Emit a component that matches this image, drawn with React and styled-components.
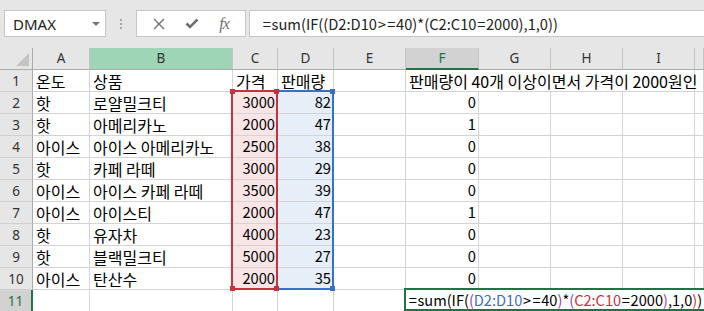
import React from "react";
import styled, { createGlobalStyle } from "styled-components";

const GlobalStyle = createGlobalStyle`
  body {
    margin: 0;
    background: #ffffff;
    overflow: hidden;
  }
`;

const CELL_FONT = `"Noto Sans CJK KR", "Noto Sans", sans-serif`;
const UI_FONT = `"Noto Sans", "Liberation Sans", sans-serif`;

const Window = styled.div`
  width: 704px;
  height: 311px;
  overflow: hidden;
  background: #ffffff;
`;

const Toolbar = styled.div`
  display: flex;
  align-items: center;
  height: 48px;
  padding: 0 0 1px 4px;
  box-sizing: border-box;
  background: #e6e6e6;
`;

const NameBox = styled.div`
  display: flex;
  align-items: center;
  justify-content: space-between;
  width: 102px;
  height: 27px;
  padding: 0 5px 0 8px;
  box-sizing: border-box;
  background: #ffffff;
  border: 1px solid #c6c6c6;
  font-family: ${UI_FONT};
  font-size: 15px;
  color: #222;
`;

const Caret = styled.span`
  width: 0;
  height: 0;
  border-left: 4px solid transparent;
  border-right: 4px solid transparent;
  border-top: 4px solid #777;
`;

const Grip = styled.div`
  display: flex;
  flex-direction: column;
  gap: 2px;
  margin: 0 14px 0 14px;
  span {
    width: 2px;
    height: 2px;
    background: #a8a8a8;
  }
`;

const ButtonGroup = styled.div`
  display: flex;
  align-items: center;
  justify-content: space-around;
  width: 110px;
  height: 27px;
  padding: 0 6px;
  box-sizing: border-box;
  background: #ffffff;
  border: 1px solid #c6c6c6;
  color: #6f6f6f;
`;

const Fx = styled.span`
  font-family: "Liberation Serif", serif;
  font-style: italic;
  font-size: 16px;
  color: #6f6f6f;
  letter-spacing: -1px;
`;

const FormulaInput = styled.div`
  flex: 1;
  display: flex;
  align-items: center;
  height: 27px;
  margin-left: 3px;
  padding-left: 12px;
  box-sizing: border-box;
  background: #ffffff;
  border: 1px solid #c6c6c6;
  border-right: none;
  font-family: ${CELL_FONT};
  font-size: 14.7px;
  color: #222;
  white-space: nowrap;
`;

const Sheet = styled.div`
  position: relative;
  display: grid;
  grid-template-columns: 33px 57px 143px 45px 56px 72px 73px 72px 72px 72px 1fr;
  grid-auto-rows: 22px;
`;

const Corner = styled.div`
  position: relative;
  background: #e6e6e6;
  border-right: 1px solid #ababab;
  border-bottom: 1px solid #ababab;
  &::after {
    content: "";
    position: absolute;
    right: 3px;
    bottom: 3px;
    width: 13px;
    height: 13px;
    background: #c4c4c4;
    clip-path: polygon(100% 0, 100% 100%, 0 100%);
  }
`;

const headerBg = { range: "#9fd5b7", selected: "#d2d2d2" };

const ColHeader = styled.div`
  display: flex;
  align-items: center;
  justify-content: center;
  padding-bottom: 1px;
  box-sizing: border-box;
  background: ${(p) => headerBg[p.$state] || "#e6e6e6"};
  border-right: 1px solid #c3c3c3;
  border-bottom: ${(p) =>
    p.$state === "selected" ? "2px solid #217346" : "1px solid #ababab"};
  font-family: ${UI_FONT};
  font-size: 13.5px;
  color: ${(p) => (p.$state === "selected" ? "#217346" : "#333")};
  overflow: hidden;
`;

const RowHeader = styled.div`
  display: flex;
  align-items: center;
  justify-content: center;
  box-sizing: border-box;
  background: ${(p) => (p.$selected ? "#d2d2d2" : "#e6e6e6")};
  border-right: ${(p) =>
    p.$selected ? "2px solid #217346" : "1px solid #ababab"};
  border-bottom: 1px solid #d0d0d0;
  font-family: ${UI_FONT};
  font-size: 13.5px;
  color: ${(p) => (p.$selected ? "#217346" : "#333")};
`;

const fills = { red: "#f9e5e6", blue: "#e6eef8" };

const Cell = styled.div`
  position: relative;
  z-index: ${(p) => (p.$overflow ? 1 : "auto")};
  display: flex;
  align-items: center;
  justify-content: ${(p) => (p.$num ? "flex-end" : "flex-start")};
  padding: 0 2px 0 3px;
  box-sizing: border-box;
  background: ${(p) => fills[p.$fill] || "#ffffff"};
  border-right: ${(p) => (p.$spill ? "none" : "1px solid #d4d4d4")};
  border-bottom: 1px solid #d4d4d4;
  font-family: ${CELL_FONT};
  font-size: ${(p) => (p.$num ? "14.7px" : "16px")};
  line-height: 1;
  color: #000;
  white-space: nowrap;
  min-width: 0;
`;

const RangeBox = styled.div`
  position: absolute;
  top: 42px;
  height: 200px;
  box-sizing: border-box;
  border: 2px solid ${(p) => p.$color};
  ${(p) => p.$noLeft && "border-left: none;"}
  pointer-events: none;
`;

const Handle = styled.span`
  position: absolute;
  width: 5px;
  height: 5px;
  background: ${(p) => p.$color};
  ${(p) => (p.$top ? "top: -3px;" : "bottom: -3px;")}
  ${(p) => (p.$left ? "left: -3px;" : "right: -3px;")}
`;

const Editor = styled.div`
  position: absolute;
  left: 404px;
  top: 240px;
  width: 310px;
  height: 23px;
  display: flex;
  align-items: center;
  padding-left: 2px;
  box-sizing: border-box;
  background: #ffffff;
  border: 2px solid #217346;
  font-family: ${CELL_FONT};
  font-size: 14.6px;
  color: #000;
  white-space: nowrap;
`;

const Tok = styled.span`
  color: ${(p) => p.$c || "inherit"};
`;

const Op = styled.span`
  margin: 0 0.7px;
`;

const RED = "#c8323f";
const BLUE = "#3a6fc6";
const PURPLE = "#9b3fa6";

const formula = [
  ["=", null, true],
  ["sum(IF(", null],
  ["(", PURPLE],
  ["D2:D10", BLUE],
  [">", null, true],
  ["=", null, true],
  ["40", null],
  [")", PURPLE],
  ["*", null],
  ["(", PURPLE],
  ["C2:C10", RED],
  ["=", null, true],
  ["2000", null],
  [")", PURPLE],
  [",1,0", null],
  [")", RED],
  [")", null],
];

const Formula = ({ colored }) =>
  formula.map(([text, color, op], i) =>
    op ? (
      <Op key={i}>{text}</Op>
    ) : (
      <Tok key={i} $c={colored ? color : null}>
        {text}
      </Tok>
    )
  );

const columns = [
  { key: "A" },
  { key: "B", state: "range" },
  { key: "C" },
  { key: "D" },
  { key: "E" },
  { key: "F", state: "selected" },
  { key: "G" },
  { key: "H" },
  { key: "I" },
  { key: "" },
];

const data = [
  ["핫", "로얄밀크티", 3000, 82, 0],
  ["핫", "아메리카노", 2000, 47, 1],
  ["아이스", "아이스 아메리카노", 2500, 38, 0],
  ["핫", "카페 라떼", 3000, 29, 0],
  ["아이스", "아이스 카페 라떼", 3500, 39, 0],
  ["아이스", "아이스티", 2000, 47, 1],
  ["핫", "유자차", 4000, 23, 0],
  ["핫", "블랙밀크티", 5000, 27, 0],
  ["아이스", "탄산수", 2000, 35, 0],
];

const blank = (n, prefix) =>
  Array.from({ length: n }, (_, i) => <Cell key={`${prefix}-${i}`} />);

const App = () => {
  return (
    <Window>
      <GlobalStyle />
      <Toolbar>
        <NameBox>
          DMAX
          <Caret />
        </NameBox>
        <Grip>
          <span />
          <span />
          <span />
        </Grip>
        <ButtonGroup>
          <svg width="12" height="12" viewBox="0 0 12 12">
            <path d="M1 1 L11 11 M11 1 L1 11" stroke="#6f6f6f" strokeWidth="1.4" fill="none" />
          </svg>
          <svg width="14" height="11" viewBox="0 0 14 11">
            <path d="M1.5 5.5 L5 9 L12.5 1.5" stroke="#6f6f6f" strokeWidth="2.6" fill="none" />
          </svg>
          <Fx>fx</Fx>
        </ButtonGroup>
        <FormulaInput>
          <Formula />
        </FormulaInput>
      </Toolbar>

      <Sheet>
        <Corner />
        {columns.map((c, i) => (
          <ColHeader key={`h-${i}`} $state={c.state}>
            {c.key}
          </ColHeader>
        ))}

        <RowHeader>1</RowHeader>
        <Cell>온도</Cell>
        <Cell>상품</Cell>
        <Cell>가격</Cell>
        <Cell>판매량</Cell>
        <Cell />
        <Cell $spill $overflow>판매량이 40개 이상이면서 가격이 2000원인</Cell>
        <Cell $spill />
        <Cell $spill />
        <Cell />
        <Cell />

        {data.map((row, r) => (
          <React.Fragment key={`r-${r}`}>
            <RowHeader>{r + 2}</RowHeader>
            <Cell>{row[0]}</Cell>
            <Cell>{row[1]}</Cell>
            <Cell $num $fill="red">{row[2]}</Cell>
            <Cell $num $fill="blue">{row[3]}</Cell>
            <Cell />
            <Cell $num>{row[4]}</Cell>
            {blank(4, `b-${r}`)}
          </React.Fragment>
        ))}

        <RowHeader $selected>11</RowHeader>
        {blank(10, "last")}

        <RangeBox $color={BLUE} $noLeft style={{ left: 277, width: 57 }}>
          <Handle $color={BLUE} $top />
          <Handle $color={BLUE} />
        </RangeBox>
        <RangeBox $color={RED} style={{ left: 231, width: 47 }}>
          <Handle $color={RED} $top $left />
          <Handle $color={RED} $top />
          <Handle $color={RED} $left />
          <Handle $color={RED} />
        </RangeBox>

        <Editor>
          <Formula colored />
        </Editor>
      </Sheet>
    </Window>
  );
};

export default App;
